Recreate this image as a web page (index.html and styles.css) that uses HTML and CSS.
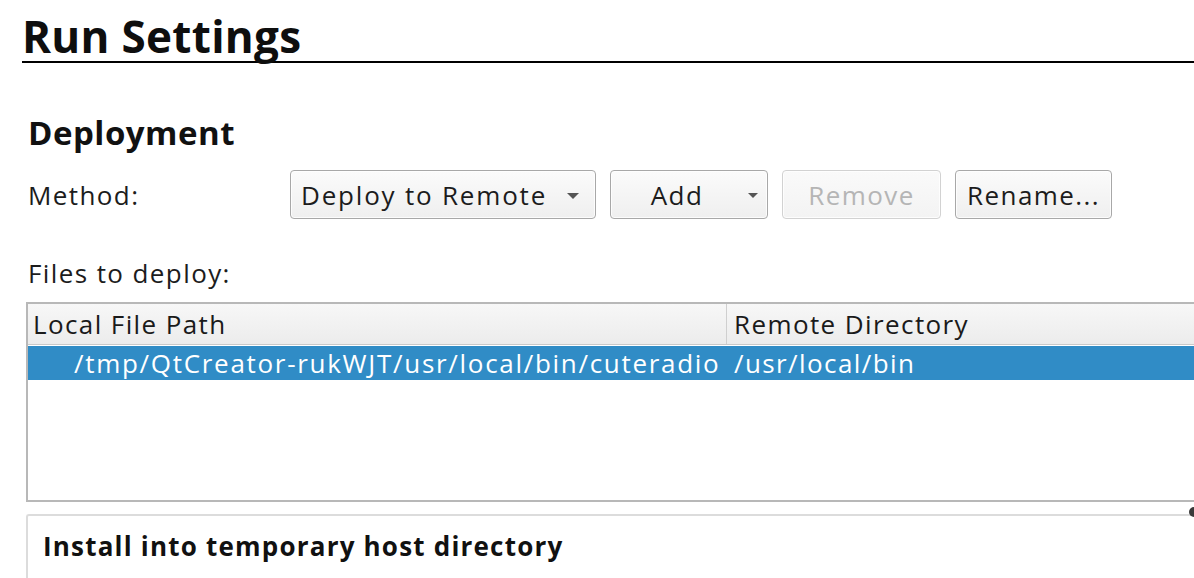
FILE: index.html
```html
<!DOCTYPE html>
<html>
<head>
<meta charset="utf-8">
<link rel="stylesheet" href="styles.css">
</head>
<body>
<div class="page">
  <h1 class="title">Run Settings</h1>
  <section class="deploy">
    <h2 class="section-title">Deployment</h2>
    <div class="method-row">
      <span class="label">Method:</span>
      <div class="combo"><span class="combo-text">Deploy to Remote</span><span class="arrow"></span></div>
      <div class="btn btn-add"><span class="btn-text">Add</span><span class="arrow"></span></div>
      <div class="btn btn-remove disabled"><span class="btn-text">Remove</span></div>
      <div class="btn btn-rename"><span class="btn-text">Rename...</span></div>
    </div>
    <div class="files-label">Files to deploy:</div>
    <div class="table">
      <div class="thead">
        <div class="th col1">Local File Path</div>
        <div class="th col2">Remote Directory</div>
      </div>
      <div class="row selected">
        <div class="td col1 indent">/tmp/QtCreator-rukWJT/usr/local/bin/cuteradio</div>
        <div class="td col2">/usr/local/bin</div>
      </div>
    </div>
    <div class="group">
      <h3 class="group-title">Install into temporary host directory</h3>
      <span class="knob"></span>
    </div>
  </section>
</div>
</body>
</html>
```

FILE: styles.css
```css
html, body {
  margin: 0;
  padding: 0;
  background: #ffffff;
  overflow: hidden;
}
body {
  font-family: "Open Sans", "Noto Sans", sans-serif;
  color: #1c1c1c;
  width: 1194px;
  height: 578px;
}
.page {
  padding-left: 22px;
}
.title {
  margin: 13px 0 0;
  font-size: 44px;
  line-height: 46px;
  font-weight: 700;
  letter-spacing: 0.3px;
  padding-bottom: 2px;
  border-bottom: 2px solid #000;
  color: #0e0e0e;
}
.deploy {
  padding-left: 4px;
}
.section-title {
  margin: 50px 0 0;
  padding-left: 2px;
  font-size: 33px;
  line-height: 40px;
  font-weight: 700;
  letter-spacing: 0.5px;
  color: #111;
}
.method-row {
  margin-top: 17px;
  display: flex;
  align-items: center;
  gap: 14px;
  height: 49px;
  font-size: 26px;
  letter-spacing: 1.4px;
}
.label {
  width: 248px;
  padding-left: 2px;
}
.combo, .btn {
  box-sizing: border-box;
  height: 49px;
  border: 1px solid #a8a8a8;
  border-radius: 4px;
  background: linear-gradient(#fbfbfb, #efefef);
  display: flex;
  align-items: center;
  position: relative;
  box-shadow: inset 0 0 0 1px rgba(255,255,255,0.8);
}
.combo {
  width: 306px;
  padding-left: 10px;
}
.combo-text {
  letter-spacing: 1.8px;
}
.btn {
  justify-content: center;
}
.btn-add {
  width: 158px;
  padding-right: 24px;
}
.btn-remove {
  width: 159px;
}
.btn-rename {
  width: 157px;
}
.btn.disabled {
  border-color: #d2d2d2;
  color: #b5b5b5;
  background: linear-gradient(#fafafa, #f3f3f3);
}
.arrow {
  position: absolute;
  top: 22px;
  width: 0;
  height: 0;
  border-left: 6px solid transparent;
  border-right: 6px solid transparent;
  border-top: 6px solid #555555;
}
.combo .arrow {
  right: 16px;
}
.btn-add .arrow {
  right: 9px;
  border-left-width: 5px;
  border-right-width: 5px;
  border-top-width: 5px;
}
.files-label {
  margin-top: 38px;
  padding-left: 2px;
  font-size: 26px;
  letter-spacing: 1.4px;
  line-height: 32px;
}
.table {
  margin-top: 13px;
  margin-right: -40px;
  box-sizing: border-box;
  height: 200px;
  border: 2px solid #b8b8b8;
  background: #fff;
  font-size: 26px;
  letter-spacing: 1.4px;
}
.thead {
  display: flex;
  height: 40px;
  border-bottom: 1px solid #c9c9c9;
  background: linear-gradient(#f7f7f7, #ececec);
}
.th {
  line-height: 40px;
  color: #1a1a1a;
}
.col1 {
  box-sizing: border-box;
  width: 699px;
  padding-left: 5px;
  white-space: nowrap;
  overflow: hidden;
}
.th.col1 {
  border-right: 1px solid #cfcfcf;
}
.col2 {
  padding-left: 7px;
  white-space: nowrap;
}
.row {
  display: flex;
  height: 34px;
  margin-top: 1px;
}
.row.selected {
  background: #308cc6;
  color: #ffffff;
}
.td {
  line-height: 34px;
}
.td.col1 {
  padding-left: 46px;
  width: 700px;
  letter-spacing: 1.7px;
}
.td.col2 {
  padding-left: 6px;
}
.group {
  margin-top: 12px;
  margin-right: -40px;
  height: 80px;
  border-top: 2px solid #dcdcdc;
  border-left: 2px solid #dcdcdc;
  border-top-left-radius: 3px;
  position: relative;
}
.group-title {
  margin: 0;
  padding: 14px 0 0 15px;
  font-size: 26px;
  line-height: 32px;
  font-weight: 700;
  letter-spacing: 1.2px;
  color: #111;
}
.knob {
  position: absolute;
  left: 1161px;
  top: -9px;
  width: 10px;
  height: 10px;
  border-radius: 50%;
  background: #3a3a3a;
}
```
